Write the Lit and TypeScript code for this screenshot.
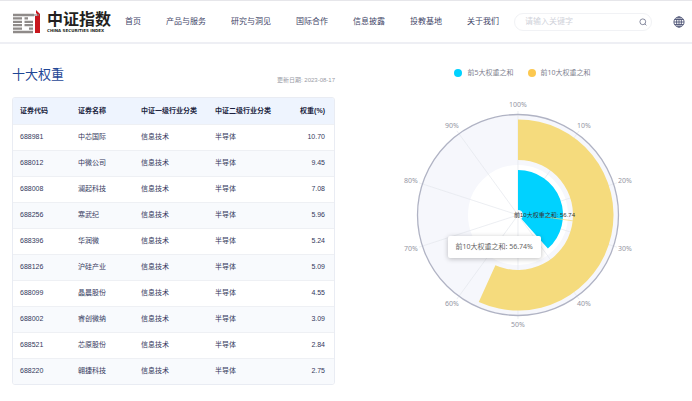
import { LitElement, html, svg, css } from "lit";
import { customElement } from "lit/decorators.js";

const NAV = ["首页", "产品与服务", "研究与洞见", "国际合作", "信息披露", "投教基地", "关于我们"];

const ROWS: [string, string, string][] = [
  ["688981", "中芯国际", "10.70"],
  ["688012", "中微公司", "9.45"],
  ["688008", "澜起科技", "7.08"],
  ["688256", "寒武纪", "5.96"],
  ["688396", "华润微", "5.24"],
  ["688126", "沪硅产业", "5.09"],
  ["688099", "晶晨股份", "4.55"],
  ["688002", "睿创微纳", "3.09"],
  ["688521", "芯原股份", "2.84"],
  ["688220", "翱捷科技", "2.75"],
];

@customElement("site-header")
class SiteHeader extends LitElement {
  static styles = css`
    :host { display: block; }
    .bar {
      display: flex; align-items: center; height: 41px; padding: 0 7px 0 12px;
      border-top: 1px solid #e6e6ea; border-bottom: 2px solid #eeeff4; background: #fff;
    }
    .logo { display: flex; align-items: center; gap: 6px; color: #231f20; text-decoration: none; }
    .mark { display: block; width: 29px; height: 24px; }
    .names { display: flex; flex-direction: column; }
    .cn { font-size: 16px; line-height: 17px; font-weight: 700; white-space: nowrap; }
    .en { font: 700 4px/5px "DejaVu Sans", sans-serif; white-space: nowrap; }
    nav { display: flex; gap: 25px; margin-left: 14px; }
    nav a { font-size: 8px; line-height: 12px; color: #3f4568; text-decoration: none; white-space: nowrap; }
    .search {
      display: flex; align-items: center; box-sizing: border-box; flex: 1; min-width: 60px; height: 18px;
      margin: 0 21px 0 15px; padding: 0 4px 0 10px; border: 1px solid #f1f2f5; border-radius: 9px;
    }
    input {
      flex: 1; min-width: 0; border: 0; padding: 0; outline: 0; background: none;
      font: 8px/12px "Liberation Sans", "Noto Sans CJK SC", sans-serif; color: #3f4568;
    }
    input::placeholder { color: #d0d2da; opacity: 1; }
    button { display: block; padding: 0; border: 0; background: none; }
    button svg { display: block; }
  `;
  render() {
    return html`<header class="bar">
      <a class="logo" href="#">
        <svg class="mark" viewBox="0 0 29 24" aria-hidden="true">
          <g fill="none" stroke="#8f8b89" stroke-width="2.3">
            <path d="M1 5H22M1 8.4H10M12.5 8.4H16M1 11.8H10M12.5 11.8H21M1 15.2H10M12.5 15.2H21M1 18.6H10M17 18.6H21M1 22H21"></path>
          </g>
          <path d="M24 0L28 4V23H23V6H25V3.6H24Z" fill="#c8161d"></path>
          <path d="M21 5H27" stroke="#8f8b89" stroke-width="1.2"></path>
        </svg>
        <span class="names"><span class="cn">中证指数</span><span class="en">CHINA SECURITIES INDEX</span></span>
      </a>
      <nav>${NAV.map((t) => html`<a href="#">${t}</a>`)}</nav>
      <form class="search" role="search">
        <input type="text" placeholder="请输入关键字" aria-label="请输入关键字" />
        <button type="button" aria-label="搜索">
          <svg width="8" height="8" viewBox="0 0 8 8" fill="none" stroke="#6b7089" stroke-width=".8">
            <circle cx="3.8" cy="3.8" r="2.9"></circle><path d="M5.8 5.8L7.4 7.4"></path>
          </svg>
        </button>
      </form>
      <button type="button" aria-label="语言">
        <svg width="12" height="12" viewBox="0 0 12 12" fill="none" stroke="#4c5274" stroke-width=".9">
          <circle cx="6" cy="6" r="5.1"></circle><ellipse cx="6" cy="6" rx="2.4" ry="5.1"></ellipse>
          <path d="M6 1V11M1 6H11M1.7 3.5H10.3M1.7 8.5H10.3"></path>
        </svg>
      </button>
    </header>`;
  }
}

@customElement("weight-table")
class WeightTable extends LitElement {
  static styles = css`
    :host { display: block; }
    .head { display: flex; justify-content: space-between; align-items: flex-end; margin-bottom: 12px; }
    h2 { margin: 0; font-size: 13px; line-height: 20px; font-weight: 400; color: #1f4796; }
    .date { font-size: 6px; line-height: 10px; color: #9a9ca6; }
    .frame { border: 1px solid #e9ecf3; border-radius: 3px; overflow: hidden; }
    table { width: 100%; table-layout: fixed; border-collapse: collapse; font-size: 7px; line-height: 10px; color: #33385c; }
    .c1 { width: 58px; } .c2 { width: 63px; } .c3 { width: 74px; } .c4 { width: 76px; } .c5 { width: 50px; }
    th, td { box-sizing: border-box; height: 26px; padding: 0 0 0 7px; text-align: left; white-space: nowrap; }
    th { background: #eef4fe; color: #1b1f3f; font-weight: 700; }
    td { border-top: 1px solid #eef0f4; }
    tbody tr:nth-child(even) { background: #f8fafd; }
    .num { text-align: right; padding: 0 9px 0 0; }
  `;
  render() {
    return html`<div class="head"><h2>十大权重</h2><span class="date">更新日期: 2023-08-17</span></div>
      <div class="frame"><table>
        <colgroup><col class="c1" /><col class="c2" /><col class="c3" /><col class="c4" /><col class="c5" /></colgroup>
        <thead><tr>
          <th scope="col">证券代码</th><th scope="col">证券名称</th><th scope="col">中证一级行业分类</th>
          <th scope="col">中证二级行业分类</th><th scope="col" class="num">权重(%)</th>
        </tr></thead>
        <tbody>${ROWS.map(([code, name, w]) => html`<tr>
          <td>${code}</td><td>${name}</td><td>信息技术</td><td>半导体</td><td class="num">${w}</td>
        </tr>`)}</tbody>
      </table></div>`;
  }
}

const C = 120;
const at = (r: number, share: number) => {
  const a = share * 2 * Math.PI;
  return `${(C + r * Math.sin(a)).toFixed(2)} ${(C - r * Math.cos(a)).toFixed(2)}`;
};
const sector = (r0: number, r1: number, share: number) => {
  const big = share > 0.5 ? 1 : 0;
  return `M${at(r0, 0)}L${at(r1, 0)}A${r1} ${r1} 0 ${big} 1 ${at(r1, share)}L${at(r0, share)}A${r0} ${r0} 0 ${big} 0 ${at(r0, 0)}Z`;
};

@customElement("weight-chart")
class WeightChart extends LitElement {
  static styles = css`
    :host { display: flex; flex-direction: column; align-items: center; }
    .legend {
      display: flex; gap: 14px; margin-left: 10px;
      font: 7px/10px "Noto Sans", "Noto Sans CJK SC", sans-serif; color: #80828f;
    }
    .key { display: flex; align-items: center; gap: 5px; }
    .dot { width: 8px; height: 8px; border-radius: 50%; }
    .five { background: #00d2ff; }
    .ten { background: #fcc850; }
    .plot { position: relative; width: 240px; margin-top: 17px; }
    .plot svg { display: block; width: 100%; }
    .tick { font: 7px "Noto Sans", sans-serif; fill: #9496a4; text-anchor: middle; }
    .value { font: 6px "Liberation Sans", "Noto Sans CJK SC", sans-serif; fill: #333; }
    .tip {
      position: absolute; left: 50px; top: 141px; padding: 6px 8px; border-radius: 2px; background: #fff;
      box-shadow: 0 1px 5px rgba(0, 0, 0, 0.25); white-space: nowrap;
      font: 7px/10px "Noto Sans", "Noto Sans CJK SC", sans-serif; color: #666;
    }
  `;
  render() {
    const steps = Array.from({ length: 10 }, (_, i) => (i + 1) / 10);
    return html`<div class="legend">
        <span class="key"><span class="dot five"></span>前5大权重之和</span>
        <span class="key"><span class="dot ten"></span>前10大权重之和</span>
      </div>
      <div class="plot">
        <svg viewBox="0 0 240 240" role="img" aria-label="前5大权重之和, 前10大权重之和">
          <circle cx=${C} cy=${C} r="75" fill="none" stroke="#f6f7fc" stroke-width="50"></circle>
          ${steps.map((s) => svg`<path d="M${at(0, s)}L${at(100, s)}" stroke="#e4e6ec" stroke-width=".7"></path>
            <path d="M${at(101, s)}L${at(104, s)}" stroke="#e4e6ec" stroke-width=".7"></path>`)}
          <circle cx=${C} cy=${C} r="100.5" fill="none" stroke="#b0b3c4" stroke-width="1.3"></circle>
          <path d=${sector(55, 95.5, 0.5674)} fill="#f5db7d"></path>
          <path d=${sector(5, 45, 0.3843)} fill="#00d2ff"></path>
          <path d="M148 122L176 126" stroke="#f5db7d" stroke-width=".7"></path>
          ${steps.map((s) => {
            const [x, y] = at(110, s).split(" ").map(Number);
            const shift = Math.sin(s * 2 * Math.PI) * 2;
            return svg`<text class="tick" x=${Math.round(x + shift)} y=${Math.round(y + 2)}>${s * 100}%</text>`;
          })}
          <text class="value" x="116" y="122">前10大权重之和: 56.74</text>
        </svg>
        <div class="tip">前10大权重之和: 56.74%</div>
      </div>`;
  }
}

@customElement("app-root")
class AppRoot extends LitElement {
  static styles = css`
    :host {
      display: block; min-height: 100vh; background: #fff;
      font-family: "Liberation Sans", "Noto Sans CJK SC", sans-serif;
    }
    main { display: grid; grid-template-columns: 1fr 1fr; gap: 22px; padding: 21px 14px 0 12px; }
    weight-chart { padding-top: 3px; }
  `;
  render() {
    return html`<site-header></site-header>
      <main><weight-table></weight-table><weight-chart></weight-chart></main>`;
  }
}
